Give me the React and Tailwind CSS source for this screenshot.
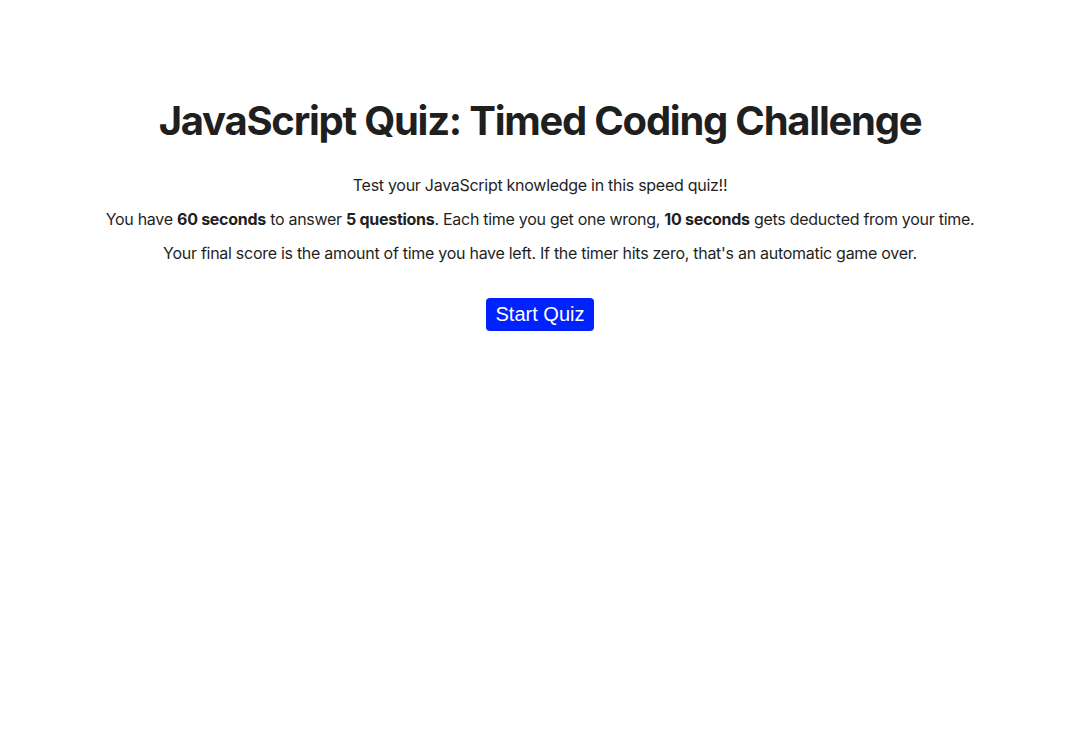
export default function App() {
  return (
    <div className="min-h-[729px] bg-white text-[#1d1d1f]" style={{ fontFamily: 'Inter, "Noto Sans", sans-serif' }}>
      <div className="flex flex-col items-center pl-[6px] pt-[96px] text-center">
        <h1 className="text-[40px] font-bold leading-[50px] tracking-[-1.25px] text-[#1f1f1f]">JavaScript Quiz: Timed Coding Challenge</h1>
        <div className="mt-[29px] flex flex-col gap-[14px] text-[16px] leading-[20px] tracking-[-0.28px] text-[#1f1f1f]">
          <p>Test your JavaScript knowledge in this speed quiz!!</p>
          <p>
            You have <b>60 seconds</b> to answer <b>5 questions</b>. Each time you get one wrong, <b>10 seconds</b> gets deducted from your time.
          </p>
          <p>Your final score is the amount of time you have left. If the timer hits zero, that's an automatic game over.</p>
        </div>
        <button
          className="mt-[35px] h-[33px] rounded-[4px] bg-[#0022ff] px-[10px] text-[20px] leading-[33px] text-white"
          style={{ fontFamily: '"Liberation Sans", Arial, sans-serif' }}
        >
          Start Quiz
        </button>
      </div>
    </div>
  );
}
